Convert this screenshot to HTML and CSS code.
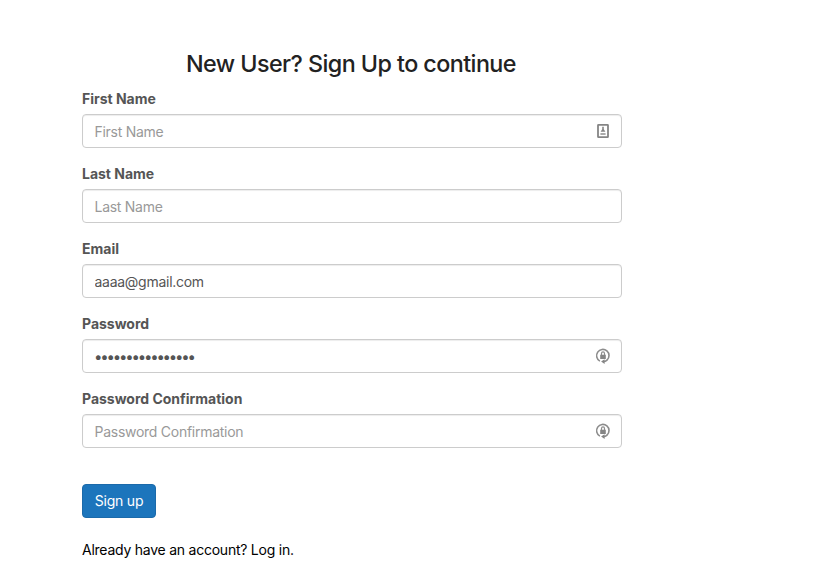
FILE: index.html
```html
<!DOCTYPE html>
<html lang="en">
<head>
<meta charset="utf-8">
<title>Sign Up</title>
<link rel="stylesheet" href="styles.css">
</head>
<body>
<main class="signup">
  <h1 class="title">New User? Sign Up to continue</h1>
  <form>
    <div class="group"><label for="first">First Name</label>
      <div class="field"><input id="first" type="text" placeholder="First Name">
        <svg class="icon" viewBox="0 0 16 16"><rect x="3" y="1.8" width="10" height="12.4" rx=".5" fill="none" stroke="#858585" stroke-width="1.8"/><path d="M7.2 3.8h1.6v2.4l1.6 2.5H5.6l1.6-2.5z" fill="#858585"/><path d="M5.4 10h5.2v2H5.4z" fill="#aaa"/></svg></div></div>
    <div class="group"><label for="last">Last Name</label>
      <div class="field"><input id="last" type="text" placeholder="Last Name"></div></div>
    <div class="group"><label for="email">Email</label>
      <div class="field"><input id="email" type="text" value="aaaa@gmail.com"></div></div>
    <div class="group"><label for="pw">Password</label>
      <div class="field"><input id="pw" class="secret" type="text" value="••••••••••••••••">
        <svg class="icon" viewBox="0 0 16 16"><path d="M4.9 13.1A6.2 6.2 0 1 1 12 12.2Q10.5 13.6 8.5 13.6" fill="none" stroke="#8c8c8c" stroke-width="1.6"/><path d="M9.6 11.2V16l-3.5-2.4zM5.2 6.8h5.6v4.2H5.2z" fill="#858585"/><path d="M6.5 7V5.4a1.5 1.5 0 0 1 3 0V7" fill="none" stroke="#8c8c8c" stroke-width="1.2"/></svg></div></div>
    <div class="group"><label for="confirm">Password Confirmation</label>
      <div class="field"><input id="confirm" type="text" placeholder="Password Confirmation">
        <svg class="icon" viewBox="0 0 16 16"><path d="M4.9 13.1A6.2 6.2 0 1 1 12 12.2Q10.5 13.6 8.5 13.6" fill="none" stroke="#8c8c8c" stroke-width="1.6"/><path d="M9.6 11.2V16l-3.5-2.4zM5.2 6.8h5.6v4.2H5.2z" fill="#858585"/><path d="M6.5 7V5.4a1.5 1.5 0 0 1 3 0V7" fill="none" stroke="#8c8c8c" stroke-width="1.2"/></svg></div></div>
    <button class="submit" type="button">Sign up</button>
  </form>
  <p class="login">Already have an account? Log in.</p>
</main>
</body>
</html>
```
FILE: styles.css
```css
* { box-sizing: border-box; }
body { margin: 0; background: #fff; font: 14px/20px Inter, sans-serif; color: #000; }
.signup { width: 540px; margin: 49px 0 0 82px; }
.title { margin: 0 0 10px; padding-right: 2px; font-size: 23.3px; line-height: 30px; font-weight: 500; text-align: center; color: #222; letter-spacing: -.55px; white-space: nowrap; }
.group { margin-bottom: 16px; }
label { display: block; height: 20px; margin-bottom: 5px; font-weight: 700; letter-spacing: -.01px; color: #555; }
.field { position: relative; }
input { display: block; width: 100%; height: 34px; padding: 6px 11.5px; border: 1px solid #ccc; border-radius: 4px; background: #fff; box-shadow: inset 0 1px 1px rgba(0,0,0,.075); font: 14px/20px Inter, sans-serif; letter-spacing: -.27px; color: #555; outline: 0; }
input::placeholder { color: #999; opacity: 1; }
.secret { padding-left: 11px; font-size: 15px; letter-spacing: -2.2px; }
.icon { position: absolute; right: 11px; top: 9px; width: 16px; height: 16px; }
.submit { display: block; width: 74px; height: 34px; margin-top: 36px; padding: 0; border: 1px solid #1b6aaa; border-radius: 4px; background: #1c75bc; color: #fff; font: 14px/20px Inter, sans-serif; letter-spacing: -.2px; }
.login { margin: 22px 0 0; letter-spacing: -.24px; }
```
